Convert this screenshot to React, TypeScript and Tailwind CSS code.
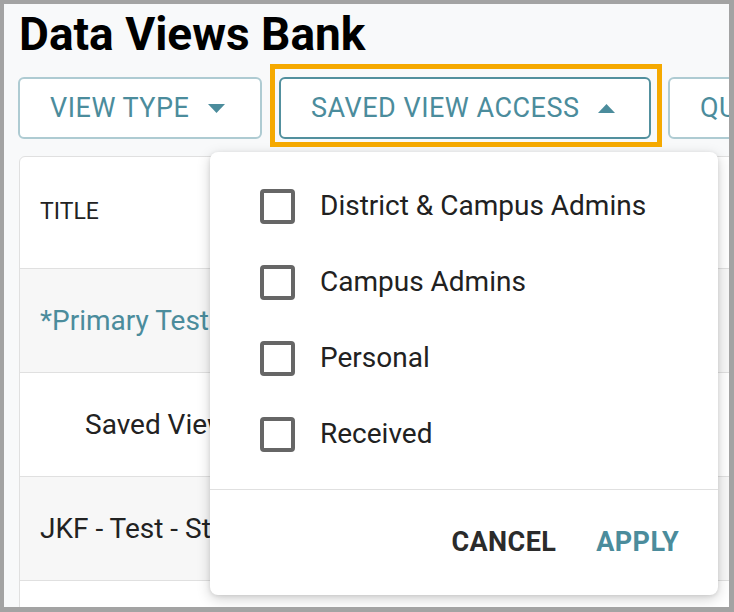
const font = { fontFamily: "Roboto, 'Liberation Sans', sans-serif" };

function Caret({ up = false }: { up?: boolean }) {
  return (
    <svg width="17" height="9" viewBox="0 0 17 9" className="shrink-0">
      {up ? <path d="M0 9L8.5 0L17 9Z" fill="#4b8c9c" /> : <path d="M0 0L8.5 9L17 0Z" fill="#4b8c9c" />}
    </svg>
  );
}

const options = ["District & Campus Admins", "Campus Admins", "Personal", "Received"];

const rows = [
  { text: "*Primary Test", cls: "bg-[#f7f7f7] pl-[20px] text-[#4b8c9c]" },
  { text: "Saved View", cls: "bg-white pl-[65px] text-[#222]" },
  { text: "JKF - Test - St", cls: "bg-[#f7f7f7] pl-[20px] text-[#222]" },
  { text: "", cls: "bg-white" },
];

export default function App() {
  return (
    <div className="h-[612px] w-[734px] bg-[#a3a3a3] pb-[5px] pl-[4px] pr-[5px] pt-[4px]" style={font}>
      <div className="relative h-full w-full overflow-hidden bg-[#f8f9fa]">
        <h1 className="pl-[15px] pt-[7px] text-[46px] font-bold leading-[46px] text-black">Data Views Bank</h1>

        <div className="mt-[20px] flex gap-[17px] pl-[14px]">
          <button className="flex h-[62px] w-[244px] shrink-0 items-center gap-[19px] rounded-[6px] border-2 border-[#aecbd2] bg-white pl-[30px] text-[27px] tracking-[0.5px] text-[#4b8c9c]">
            VIEW TYPE <Caret />
          </button>
          <button className="flex h-[62px] w-[372px] shrink-0 items-center gap-[18px] rounded-[6px] border-2 border-[#52909e] bg-white pl-[30px] text-[27px] tracking-[0.5px] text-[#4b8c9c]">
            SAVED VIEW ACCESS <Caret up />
          </button>
          <button className="flex h-[62px] w-[200px] shrink-0 items-center overflow-hidden whitespace-nowrap rounded-[6px] border-2 border-[#aecbd2] bg-white pl-[30px] text-[27px] tracking-[0.5px] text-[#4b8c9c]">
            QU
          </button>
        </div>

        <div className="ml-[15px] mt-[17px] w-[800px] overflow-hidden rounded-[6px] border border-[#e0e0e0] bg-white">
          <div className="flex h-[112px] items-center border-b border-[#e0e0e0] pl-[20px] text-[23px] text-[#222]">TITLE</div>
          {rows.map((r, i) => (
            <div key={i} className={`flex h-[104px] items-center border-b border-[#e0e0e0] text-[28px] ${r.cls}`}>
              {r.text}
            </div>
          ))}
        </div>

        <div className="absolute left-[206px] top-[148px] w-[508px] rounded-[8px] bg-white shadow-[0_4px_14px_rgba(0,0,0,0.18),0_1px_4px_rgba(0,0,0,0.1)]">
          <div className="pb-[17px] pt-[16px]">
            {options.map((o) => (
              <div key={o} className="flex h-[76px] items-center gap-[25px] pl-[50px] text-[28px] text-[#212121]">
                <span className="h-[35px] w-[35px] shrink-0 rounded-[4px] border-[4px] border-[#666]" />
                {o}
              </div>
            ))}
          </div>
          <div className="h-px bg-[#e0e0e0]" />
          <div className="flex h-[105px] items-center justify-end gap-[40px] pr-[39px] text-[27px] font-bold tracking-[0.4px]">
            <span className="text-[#2b2b2b]">CANCEL</span>
            <span className="text-[#4b8c9c]">APPLY</span>
          </div>
        </div>

        <div className="pointer-events-none absolute left-[266px] top-[60px] h-[83px] w-[392px] border-[5px] border-[#f5a900]" />
      </div>
    </div>
  );
}
